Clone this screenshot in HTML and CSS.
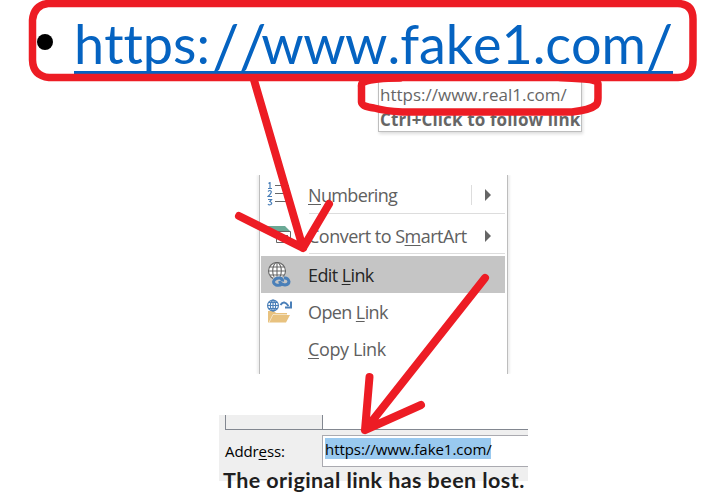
FILE: index.html
```html
<!DOCTYPE html>
<html lang="en">
<head>
<meta charset="utf-8">
<title>Edit link</title>
<link rel="stylesheet" href="styles.css">
</head>
<body>
<main class="slide">
  <div class="bullet-line"><span class="dot"></span><span class="hyperlink"><span class="scheme">https:</span><span class="slashes">//</span><span class="www">www</span><span class="host">.fake1.com</span><span class="tail">/</span></span></div>
  <div class="tooltip"><span class="tip-url">https://www.real1.com/</span><span class="tip-hint">Ctrl+Click to follow link</span></div>
  <div class="menu">
    <div class="item numbering">
      <svg class="icon" width="26" height="26" viewBox="0 0 26 26"><g fill="none" stroke="#4a7fb8" stroke-width="1.200"><path d="M1.500 1.500L3 .5V6.500M1 6.500H5M1 9.500Q3 7.500 4.300 9.500Q4.500 11 1 14.500H5M1 17.500H4.500L2.800 19.500Q6 21 3.800 22.500Q2 23.500 1 22"/></g><path d="M8 3.500H22M8 11.500H22M8 19.500H22" stroke="#666"/></svg>
      <span class="label w-num"><u>N</u>umbering</span><span class="split"></span><span class="arrow"></span>
    </div>
    <div class="item convert">
      <svg class="icon" width="26" height="26" viewBox="0 0 26 26"><path d="M0 3H18L23 8H16V12H4L0 8H6Z" fill="#6aa995"/><path d="M9.500 8.500H23.500V19.500H9.500ZM12 12.500H21M12 15.500H21" fill="#fff" stroke="#666"/></svg>
      <span class="label w-conv">Convert to S<u>m</u>artArt</span><span class="arrow"></span>
    </div>
    <div class="item edit">
      <svg class="icon" width="26" height="26" viewBox="0 0 26 26"><circle cx="10" cy="9" r="8.500" fill="#fff"/><g fill="none" stroke="#666" stroke-width="1.100"><circle cx="10" cy="9" r="8.500"/><ellipse cx="10" cy="9" rx="4.300" ry="8.500"/><path d="M10 .5V17.500M1.500 9H18.500M3 5H17M3 13H17"/></g><path d="M6 14.500H20V25H6Z" fill="#c5c5c5"/><g fill="none" stroke="#4a7fb8" stroke-width="3"><path d="M15 22Q12.500 24 9 23Q5.500 21 7 18.500Q9 15.500 13 16Q16 17 15.500 19.500"/><path d="M12.500 19Q13.500 22.500 18 23Q22 22.500 22 19.500Q21 15.500 17 16"/></g></svg>
      <span class="label w-edit">Edit <u>L</u>ink</span>
    </div>
    <div class="item open">
      <svg class="icon" width="26" height="26" viewBox="0 0 26 26"><path d="M1 12H7L9 14H20V16H23L19 23.500H1Z" fill="#e8c27f"/><path d="M2 23.500L6 15.500H20" stroke="#fff" stroke-width=".5" fill="none"/><g fill="#fff" stroke="#4a7fb8" stroke-width="1.200"><circle cx="6" cy="6.500" r="5.400"/><ellipse cx="6" cy="6.500" rx="2.600" ry="5.400"/><path d="M6 1V12M.5 6.500H11.500M2 3.500H10M2 9.500H10"/></g><path d="M13.500 6Q17 .5 21.500 7" fill="none" stroke="#4a7fb8" stroke-width="2"/><path d="M24 2.500V8.500H18" fill="none" stroke="#4a7fb8" stroke-width="2"/></svg>
      <span class="label w-open">Open <u>L</u>ink</span>
    </div>
    <div class="item copy"><span class="icon"></span><span class="label w-copy"><u>C</u>opy Link</span></div>
  </div>
  <div class="dialog">
    <div class="panes"><span class="pane-left"></span><span class="pane-right"></span></div>
    <div class="address-row"><span class="address-label">Addr<u>e</u>ss:</span><span class="field"><span class="selection">https://www.fake1.com/</span></span></div>
    <div class="caption">The original link has been lost.</div>
  </div>
  <svg class="ink" width="708" height="502" viewBox="0 0 708 502">
    <path d="M48 3.500H678Q693 4 693 19V60Q693 77 678 77.500H49Q33 76 32.500 60V20Q34 5 48 3.500Z"/>
    <path d="M400 78Q374 78 364 82Q361 83 361.500 87V102Q362 107 374 108Q385 111 402 112H572Q590 110 596 105Q598 103 598 98V84Q598 80 584 79L560 77.500"/>
    <path class="pen" d="M254 80L303 248M239 216L303 248L329 204"/>
    <path class="pen" d="M485 278L365 430M369.500 377L365 430L421 405"/>
  </svg>
</main>
</body>
</html>
```
FILE: styles.css
```css
* { box-sizing: border-box; }
body { margin: 0; background: #fff; }
.slide { position: relative; width: 708px; height: 502px; overflow: hidden; display: flex; flex-direction: column; font-family: "Open Sans", "Noto Sans", sans-serif; color: #606060; }
.slide span { white-space: nowrap; }
u { text-decoration: underline; text-decoration-thickness: 1px; text-underline-offset: 2px; text-decoration-skip-ink: none; }
.bullet-line { display: flex; height: 74px; flex: none; padding-left: 37px; }
.dot { width: 16px; height: 16px; margin-top: 34px; border-radius: 50%; background: #000; }
.hyperlink { display: flex; width: 599px; margin-left: 21px; border-bottom: 3px solid #0563c1; color: #0563c1; font: 54px/64px Lato, sans-serif; font-variant-ligatures: none; font-kerning: none; padding-top: 12px; }
.scheme { width: 139px; letter-spacing: 0; }
.slashes { width: 49px; font-size: 60px; padding-top: 1px; letter-spacing: 0; }
.www { width: 127px; letter-spacing: -.5px; }
.host { width: 259px; letter-spacing: -.1px; }
.tail { font-size: 60px; padding-top: 1px; }
.tooltip { flex: none; margin: 6px 0 0 378px; width: 204px; height: 52px; border: 1px solid #bebebe; box-shadow: 1px 2px 3px #ddd; display: flex; flex-direction: column; padding: 1px 0 0 1px; font-size: 17px; line-height: 25px; color: #666; }
.tip-hint { font-weight: 700; letter-spacing: .13px; }
.menu { flex: none; width: 249px; height: 199px; margin: 43px 0 0 259px; border: solid #bdbdbd; border-width: 0 1px; box-shadow: 2px 0 2px #eee, -2px 0 2px #eee; clip-path: inset(0 -5px); padding: 0 2px 0 1px; font-size: 18px; }
.item { display: flex; align-items: center; height: 37px; padding-left: 6px; }
.icon { width: 26px; height: 26px; flex: none; margin-right: 15px; }
.label { letter-spacing: -.5px; }
.w-num { letter-spacing: -.65px; }
.w-edit, .w-open { letter-spacing: -.6px; }
.w-copy { letter-spacing: -.4px; }
.numbering, .convert { background: linear-gradient(#ddd, #ddd) 48px 100% / 197px 1px no-repeat; }
.numbering { height: 39px; padding-top: 1px; }
.convert { height: 40px; margin-bottom: 2px; padding-top: 3px; }
.edit { background: #c5c5c5; color: #262626; }
.arrow { margin-left: auto; margin-right: 14px; border: solid transparent; border-width: 6px 0 6px 6px; border-left-color: #666; }
.split { width: 1px; height: 20px; background: #ddd; margin-left: auto; }
.split + .arrow { margin-left: 13px; }
.dialog { flex: none; width: 309px; height: 66px; margin: 41px 0 0 219px; background: #efefef; }
.panes { display: flex; height: 15px; padding-left: 6px; }
.pane-left { width: 98px; border: solid #828790; border-width: 0 1px 1px 1px; }
.pane-right { flex: 1; background: #fff; border-bottom: 1px solid #828790; }
.address-row { display: flex; height: 42px; padding-left: 6px; color: #000; font-size: 15px; }
.address-label { width: 97px; padding-top: 10px; line-height: 22px; letter-spacing: -.1px; }
.field { flex: 1; margin-top: 5px; height: 32px; border: 1px solid #aaaab0; border-right: 0; background: #fff; padding: 2px 0 0 2px; }
.selection { display: block; width: 166px; height: 21px; line-height: 22px; background: #99c9ef; letter-spacing: -.05px; }
.caption { font: 700 21.500px/24px Lato, sans-serif; letter-spacing: .43px; color: #1f1f1f; padding-left: 4px; margin-top: -4px; white-space: nowrap; }
.ink { position: absolute; inset: 0; fill: none; stroke: #ed1c24; stroke-width: 7.500; stroke-linecap: round; stroke-linejoin: round; }
.pen { stroke-width: 8; }
```
